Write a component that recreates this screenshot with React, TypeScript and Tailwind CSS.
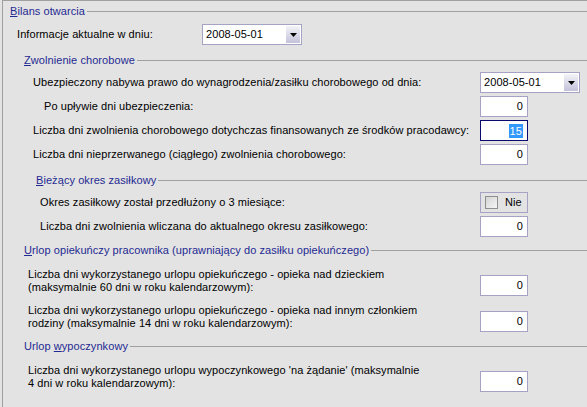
import type { ReactNode } from "react";

const font = { fontFamily: '"Liberation Sans", Arial, sans-serif' };

function Header({ children, indent, mt }: { children: ReactNode; indent: string; mt: string }) {
  return (
    <div className={`flex h-[14px] items-center ${indent} ${mt}`}>
      <span className="whitespace-nowrap pr-[2px] text-[#1f2a92]">{children}</span>
      <div className="h-px flex-1 bg-[#a0a0a0]" />
    </div>
  );
}

function Combo({ value }: { value: string }) {
  return (
    <div className="flex h-[21px] w-[100px] items-stretch border border-[#a5a2c6] bg-white p-px">
      <span className="flex-1 pl-[2px] leading-[17px] text-black">{value}</span>
      <div className="flex w-[14px] items-center justify-center bg-gradient-to-b from-[#f3f3f8] to-[#c3c2da]">
        <svg width="7" height="4" viewBox="0 0 7 4">
          <path d="M0 0h7L3.5 4z" fill="#000" />
        </svg>
      </div>
    </div>
  );
}

function NumBox({ value, focused }: { value: string; focused?: boolean }) {
  return (
    <div
      className={`flex h-[21px] w-[48px] items-center justify-end border bg-white pr-[4px] ${
        focused ? "border-[#0a0a6e]" : "border-[#a5a2c6]"
      }`}
    >
      {focused ? (
        <span className="bg-[#3399ff] px-px leading-[14px] text-white">{value}</span>
      ) : (
        <span className="text-black">{value}</span>
      )}
    </div>
  );
}

function Row({ label, indent, mt, children }: { label: string; indent: string; mt: string; children: ReactNode }) {
  return (
    <div className={`flex h-[21px] items-center pr-[7px] ${mt}`}>
      <span className={`flex-1 whitespace-nowrap text-black ${indent}`}>{label}</span>
      <div className="w-[100px]">{children}</div>
    </div>
  );
}

function TwoLine({ lines, mt }: { lines: [string, string]; mt: string }) {
  return (
    <div className={`flex items-start pr-[7px] ${mt}`}>
      <div className="flex-1 pl-[25px] leading-[13px] text-black">
        <div>{lines[0]}</div>
        <div>{lines[1]}</div>
      </div>
      <div className="mt-[7px] w-[100px]">
        <NumBox value="0" />
      </div>
    </div>
  );
}

export default function App() {
  return (
    <div className="h-[407px] w-[587px] overflow-hidden bg-[#e3e3e3] text-[11px] tracking-[0.07px]" style={font}>
      <div className="ml-[2px] h-full border-l border-t border-[#a0a0a0]">
        <Header indent="pl-[7px]" mt="mt-[3px]">
          <u>B</u>ilans otwarcia
        </Header>

        <div className="mt-[6px] flex h-[21px] items-center">
          <span className="w-[199px] pl-[14px] text-black">Informacje aktualne w dniu:</span>
          <Combo value="2008-05-01" />
        </div>

        <Header indent="pl-[21px]" mt="mt-[8px]">
          <u>Z</u>wolnienie chorobowe
        </Header>
        <Row label="Ubezpieczony nabywa prawo do wynagrodzenia/zasiłku chorobowego od dnia:" indent="pl-[30px]" mt="mt-[5px]">
          <Combo value="2008-05-01" />
        </Row>
        <Row label="Po upływie dni ubezpieczenia:" indent="pl-[41px]" mt="mt-[3px]">
          <NumBox value="0" />
        </Row>
        <Row
          label="Liczba dni zwolnienia chorobowego dotychczas finansowanych ze środków pracodawcy:"
          indent="pl-[30px]"
          mt="mt-[3px]"
        >
          <NumBox value="15" focused />
        </Row>
        <Row label="Liczba dni nieprzerwanego (ciągłego) zwolnienia chorobowego:" indent="pl-[30px]" mt="mt-[3px]">
          <NumBox value="0" />
        </Row>

        <Header indent="pl-[33px]" mt="mt-[8px]">
          <u>B</u>ieżący okres zasiłkowy
        </Header>
        <Row label="Okres zasiłkowy został przedłużony o 3 miesiące:" indent="pl-[37px]" mt="mt-[5px]">
          <div className="flex h-[21px] w-[48px] items-center border border-[#a5a2c6] pl-[4px]">
            <span className="h-[13px] w-[13px] border border-[#8e8f8f] bg-gradient-to-br from-[#d4d4d4] to-[#f6f6f6]" />
            <span className="ml-[7px] text-black">Nie</span>
          </div>
        </Row>
        <Row label="Liczba dni zwolnienia wliczana do aktualnego okresu zasiłkowego:" indent="pl-[37px]" mt="mt-[3px]">
          <NumBox value="0" />
        </Row>

        <Header indent="pl-[21px]" mt="mt-[6px]">
          <u>U</u>rlop opiekuńczy pracownika (uprawniający do zasiłku opiekuńczego)
        </Header>
        <TwoLine
          mt="mt-[11px]"
          lines={[
            "Liczba dni wykorzystanego urlopu opiekuńczego - opieka nad dzieckiem",
            "(maksymalnie 60 dni w roku kalendarzowym):",
          ]}
        />
        <TwoLine
          mt="mt-[8px]"
          lines={[
            "Liczba dni wykorzystanego urlopu opiekuńczego - opieka nad innym członkiem",
            "rodziny (maksymalnie 14 dni w roku kalendarzowym):",
          ]}
        />

        <Header indent="pl-[21px]" mt="mt-[7px]">
          Urlop <u>w</u>ypoczynkowy
        </Header>
        <TwoLine
          mt="mt-[11px]"
          lines={[
            "Liczba dni wykorzystanego urlopu wypoczynkowego 'na żądanie' (maksymalnie",
            "4 dni w roku kalendarzowym):",
          ]}
        />
      </div>
    </div>
  );
}
